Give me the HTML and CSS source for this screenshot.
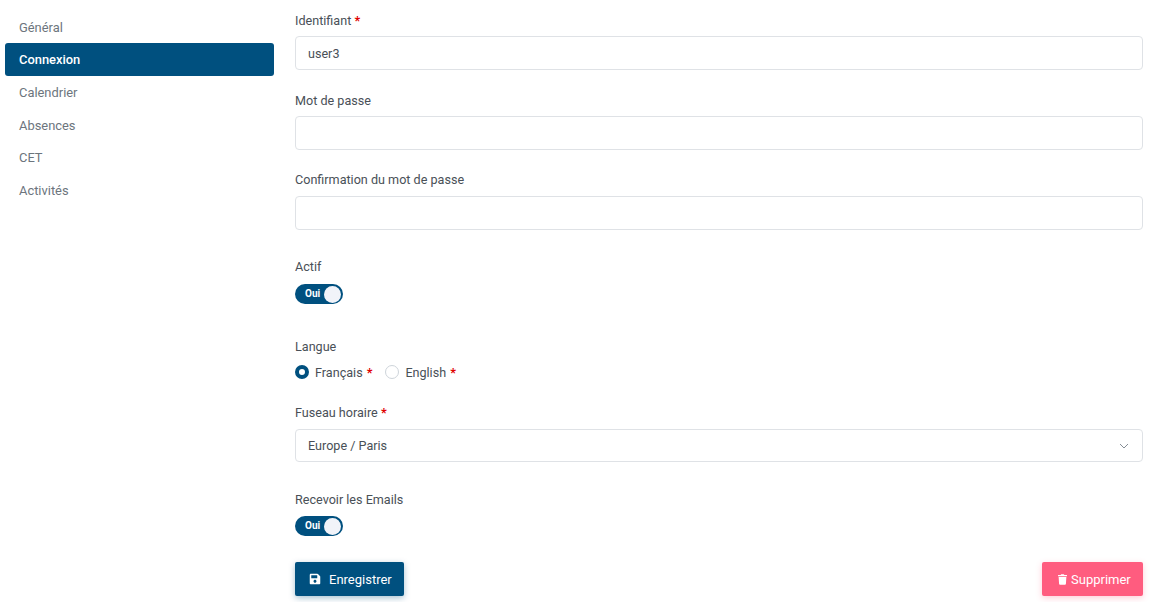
FILE: index.html
```html
<!DOCTYPE html>
<html lang="fr">
<head>
    <meta charset="UTF-8">
    <meta name="viewport" content="width=device-width, initial-scale=1.0">
    <title>Connexion</title>

    <link rel="stylesheet" href="styles.css">
</head>
<body>
    <ul class="side">
        <li><a href="#">Général</a></li>
        <li><a href="#" class="active">Connexion</a></li>
        <li><a href="#">Calendrier</a></li>
        <li><a href="#">Absences</a></li>
        <li><a href="#">CET</a></li>
        <li><a href="#">Activités</a></li>
    </ul>

    <form class="main">
        <div class="field f-login">
            <label>Identifiant <span class="req">*</span></label>
            <div class="input">user3</div>
        </div>
        <div class="field f-pass">
            <label>Mot de passe</label>
            <div class="input"></div>
        </div>
        <div class="field f-confirm">
            <label>Confirmation du mot de passe</label>
            <div class="input"></div>
        </div>
        <div class="field f-active">
            <label>Actif</label>
            <div class="toggle"><span>Oui</span><i></i></div>
        </div>
        <div class="field f-lang">
            <label>Langue</label>
            <div class="radios">
                <div class="radio on"><i></i>Français <span class="req">*</span></div>
                <div class="radio"><i></i>English <span class="req">*</span></div>
            </div>
        </div>
        <div class="field f-zone">
            <label>Fuseau horaire <span class="req">*</span></label>
            <div class="input select">
                Europe / Paris
                <svg width="10" height="6" viewBox="0 0 10 6"><path d="M1 1l4 4 4-4" fill="none" stroke="#868e96" stroke-width="1"/></svg>
            </div>
        </div>
        <div class="field f-mail">
            <label>Recevoir les Emails</label>
            <div class="toggle"><span>Oui</span><i></i></div>
        </div>
        <div class="actions">
            <button type="button" class="btn save">
                <svg width="12" height="12" viewBox="0 0 448 512"><path fill="#fff" d="M433.9 129.9l-83.9-83.9A48 48 0 0 0 316.1 32H48C21.5 32 0 53.5 0 80v352c0 26.5 21.5 48 48 48h352c26.5 0 48-21.5 48-48V163.900a48 48 0 0 0-14.100-34zM224 416c-35.300 0-64-28.700-64-64s28.700-64 64-64 64 28.700 64 64-28.700 64-64 64zm96-304.500V212c0 6.600-5.400 12-12 12H76c-6.600 0-12-5.400-12-12V108c0-6.600 5.400-12 12-12h228.500c3.200 0 6.200 1.300 8.500 3.500l3.500 3.500c2.200 2.300 3.500 5.300 3.500 8.500z"/></svg>
                Enregistrer
            </button>
            <button type="button" class="btn del">
                <svg width="9" height="11" viewBox="0 0 448 512"><path fill="#fff" d="M432 32H312l-9.400-18.700A24 24 0 0 0 281.100 0H166.800a23.700 23.700 0 0 0-21.400 13.300L136 32H16A16 16 0 0 0 0 48v32a16 16 0 0 0 16 16h416a16 16 0 0 0 16-16V48a16 16 0 0 0-16-16zM53.200 467a48 48 0 0 0 47.900 45h245.800a48 48 0 0 0 47.900-45L416 128H32z"/></svg>
                Supprimer
            </button>
        </div>
    </form>
</body>
</html>
```

FILE: styles.css
```css
body {
    margin: 0;
    display: flex;
    height: 602px;
    overflow: hidden;
    background: #fff;
    font-family: Roboto, "Liberation Sans", sans-serif;
    font-size: 12.6px;
    color: #495057;
}
.side {
    list-style: none;
    margin: 0;
    padding: 10.6px 0 0 5px;
    width: 269px;
    flex: none;
    font-size: 12.9px;
}
.side a {
    display: block;
    height: 32.7px;
    line-height: 34.7px;
    padding-left: 14px;
    border-radius: 3px;
    color: #6c757d;
    text-decoration: none;
}
.side a.active {
    background: #00507f;
    color: #fff;
    font-weight: 500;
}
.main {
    margin-left: 21px;
    width: 848px;
    padding-top: 11px;
}
.field label {
    display: block;
    height: 18px;
    line-height: 20px;
    margin-bottom: 7px;
    color: #495057;
}
.req {
    color: #e00000;
    font-weight: 700;
}
.input {
    box-sizing: border-box;
    height: 34px;
    line-height: 34px;
    padding: 0 12px;
    border: 1px solid #dfe2e6;
    border-radius: 4px;
    color: #495057;
}
.f-pass { margin-top: 21px; }
.f-confirm { margin-top: 20px; }
.f-confirm label { margin-bottom: 8px; }
.f-active { margin-top: 27px; }
.f-lang { margin-top: 33px; }
.f-zone { margin-top: 22px; }
.f-zone label { margin-bottom: 8px; }
.f-mail { margin-top: 28px; }
.f-active .toggle { margin-top: 9px; }
.f-mail .toggle { margin-top: 8px; }
.toggle {
    box-sizing: border-box;
    width: 48px;
    height: 20px;
    padding: 0 2px 0 10px;
    border-radius: 10px;
    background: #00507f;
    color: #fff;
    font-size: 10px;
    font-weight: 700;
    line-height: 20px;
    display: flex;
    justify-content: space-between;
    align-items: center;
}
.toggle i {
    width: 17px;
    height: 17px;
    border-radius: 50%;
    background: #f1f3f9;
}
.radios {
    display: flex;
    gap: 13px;
    margin-top: 8px;
}
.radio {
    display: flex;
    align-items: center;
    gap: 4px;
    height: 18px;
}
.radio i {
    box-sizing: border-box;
    width: 14px;
    height: 14px;
    margin-right: 2px;
    border: 1px solid #ced4da;
    border-radius: 50%;
    background: #fff;
}
.radio.on i {
    border: 4px solid #00507f;
}
.select {
    height: 33px;
    display: flex;
    justify-content: space-between;
    align-items: center;
}
.select svg { margin-right: 1px; }
.actions {
    display: flex;
    justify-content: space-between;
    margin-top: 26px;
}
.btn {
    height: 34px;
    border: 0;
    border-radius: 2px;
    color: #fff;
    font: 13px Roboto, "Liberation Sans", sans-serif;
    display: flex;
    align-items: center;
}
.save {
    width: 109px;
    padding: 0 0 0 14px;
    gap: 8px;
    background: #00507f;
    box-shadow: 0 2px 6px rgba(0, 80, 127, .35);
}
.del {
    width: 101px;
    padding: 0 0 0 16px;
    gap: 4px;
    background: #ff5c7f;
    box-shadow: 0 2px 6px rgba(255, 92, 127, .3);
}
```
